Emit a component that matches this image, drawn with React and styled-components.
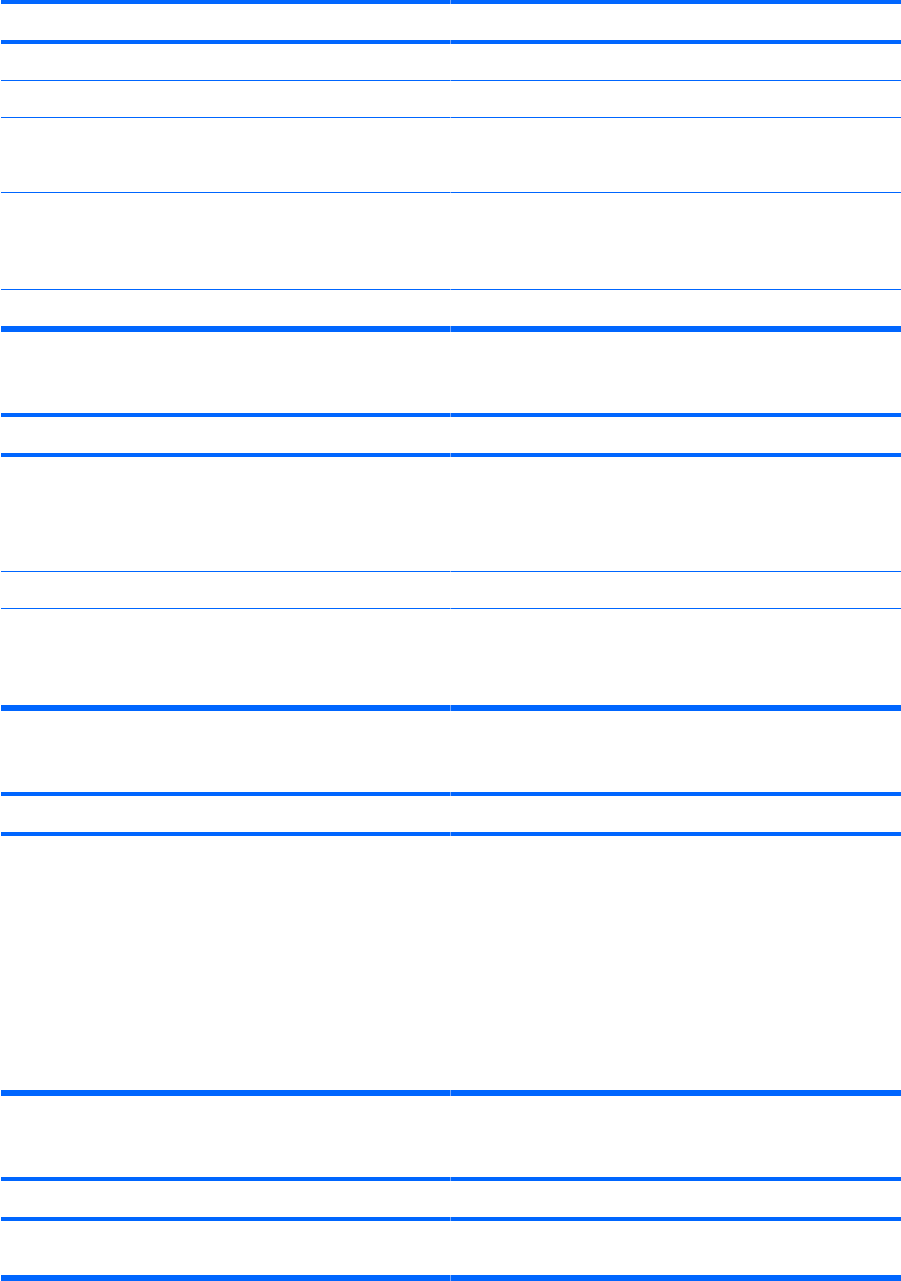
import React from "react";
import styled, { createGlobalStyle } from "styled-components";

const Global = createGlobalStyle`
  html, body { margin: 0; padding: 0; background: #ffffff; }
  body { font-family: "Liberation Sans", Arial, sans-serif; }
`;

const BLUE = "#0066ff";
const JOIN = "#7aa9f8";

const Page = styled.div`
  width: 901px;
  display: flex;
  flex-direction: column;
`;

const Table = styled.section`
  display: flex;
  flex-direction: column;
  margin-left: 1px;
  width: 900px;
`;

const Row = styled.div`
  display: grid;
  grid-template-columns: 449px 1px 449px 1px;
  height: ${(p) => p.$h}px;
  box-sizing: content-box;
  border-bottom: ${(p) => p.$rule}px solid ${BLUE};
  border-image: linear-gradient(
      to right,
      ${BLUE} 0,
      ${BLUE} 449px,
      ${JOIN} 449px,
      ${JOIN} 450px,
      ${BLUE} 450px,
      ${BLUE} 899px,
      ${JOIN} 899px,
      ${JOIN} 900px
    )
    1;
`;

const Cell = styled.div`
  grid-column: ${(p) => (p.$right ? 3 : 1)};
  font-size: 14px;
  color: #000;
`;

const tables = [
  {
    rows: [
      [0, 4],
      [36, 4],
      [36, 1],
      [36, 1],
      [74, 1],
      [96, 1],
      [36, 6],
    ],
  },
  {
    rows: [
      [81, 4],
      [36, 4],
      [114, 1],
      [36, 1],
      [96, 6],
    ],
  },
  {
    rows: [
      [81, 4],
      [36, 4],
      [254, 6],
    ],
  },
  {
    rows: [
      [81, 4],
      [36, 4],
      [54, 6],
    ],
  },
];

export default function App() {
  return (
    <>
      <Global />
      <Page>
        {tables.map((t, i) => (
          <Table key={i}>
            {t.rows.map(([h, rule], j) => (
              <Row key={j} $h={h} $rule={rule}>
                <Cell />
                <Cell $right />
              </Row>
            ))}
          </Table>
        ))}
      </Page>
    </>
  );
}
